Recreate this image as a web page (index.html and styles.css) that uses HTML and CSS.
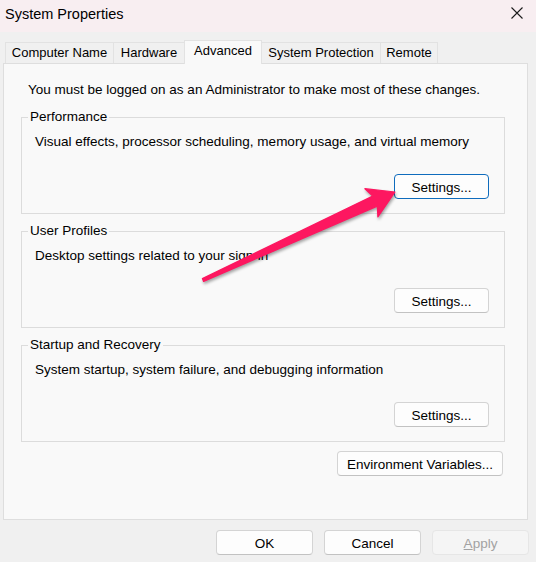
FILE: index.html
```html
<!DOCTYPE html>
<html lang="en">
<head>
<meta charset="utf-8">
<title>System Properties</title>
<link rel="stylesheet" href="styles.css">
</head>
<body>
<div class="window">
  <header class="titlebar">
    <span class="title">System Properties</span>
    <span class="close" aria-label="Close">
      <svg width="12" height="12" viewBox="0 0 12 12"><path d="M0.5 0.5 L11.5 11.5 M11.5 0.5 L0.5 11.5" stroke="#1b1b1b" stroke-width="1.1" fill="none"/></svg>
    </span>
  </header>

  <nav class="tabs">
    <div class="tab tab-first w-cn">Computer Name</div>
    <div class="tab w-hw">Hardware</div>
    <div class="tab active w-adv">Advanced</div>
    <div class="tab w-sp">System Protection</div>
    <div class="tab w-rm">Remote</div>
  </nav>

  <section class="panel">
    <p class="note">You must be logged on as an Administrator to make most of these changes.</p>

    <fieldset class="group">
      <legend>Performance</legend>
      <p class="desc">Visual effects, processor scheduling, memory usage, and virtual memory</p>
      <div class="row"><button class="btn btn-set focus">Settings...</button></div>
    </fieldset>

    <fieldset class="group">
      <legend>User Profiles</legend>
      <p class="desc">Desktop settings related to your sign-in</p>
      <div class="row"><button class="btn btn-set">Settings...</button></div>
    </fieldset>

    <fieldset class="group">
      <legend>Startup and Recovery</legend>
      <p class="desc">System startup, system failure, and debugging information</p>
      <div class="row"><button class="btn btn-set">Settings...</button></div>
    </fieldset>

    <div class="row env-row"><button class="btn btn-env">Environment Variables...</button></div>
  </section>

  <footer class="actions">
    <button class="btn btn-act">OK</button>
    <button class="btn btn-act">Cancel</button>
    <button class="btn btn-act disabled"><u>A</u>pply</button>
  </footer>

  <svg class="arrow" width="536" height="562" viewBox="0 0 536 562">
    <polygon points="202.4,278.6 372.7,196.1 364.9,188.7 395,192 377.9,216.9 377.3,206.1 203.6,281.4" fill="#fd1760" stroke="#fd1760" stroke-width="1.2" stroke-linejoin="round"/>
  </svg>
</div>
</body>
</html>
```

FILE: styles.css
```css
* { box-sizing: border-box; }

html, body {
  margin: 0;
  padding: 0;
  background: #f0f0f0;
}

body {
  font-family: "Liberation Sans", Arial, sans-serif;
  font-size: 13.5px;
  color: #000;
}

.window {
  position: relative;
  width: 536px;
  height: 562px;
  overflow: hidden;
  background: #f0f0f0;
}

/* Title bar */
.titlebar {
  height: 32px;
  background: #f8eef1;
  display: flex;
  justify-content: space-between;
  align-items: flex-start;
  padding-left: 5px;
}

.title {
  margin-top: 6px;
  line-height: 16px;
  font-size: 14.5px;
  color: #000;
}

.close {
  display: block;
  width: 12px;
  height: 12px;
  margin-top: 7px;
  margin-right: 13px;
}
.close svg { display: block; }

/* Tabs */
.tabs {
  display: flex;
  align-items: flex-end;
  height: 23px;
  margin-top: 8px;
  padding-left: 5px;
  font-size: 13px;
}

.tab {
  height: 21px;
  line-height: 20px;
  text-align: center;
  background: #f0f0f0;
  border-top: 1px solid #e2e2e2;
  border-right: 1px solid #e2e2e2;
  color: #000;
  white-space: nowrap;
}

.tab-first { border-left: 1px solid #e2e2e2; }

.tab.active {
  position: relative;
  z-index: 2;
  height: 24px;
  margin-bottom: -1px;
  line-height: 20px;
  padding-bottom: 3px;
  background: #f9f9f9;
  border-left: 1px solid #e2e2e2;
  margin-left: -1px;
}

.w-cn { width: 109px; }
.w-hw { width: 71px; }
.w-adv { width: 78px; }
.w-sp { width: 119px; }
.w-rm { width: 57px; }

/* Panel */
.panel {
  margin-left: 3px;
  width: 525px;
  height: 457px;
  background: #f9f9f9;
  border: 1px solid #dedede;
  padding: 16px 22px 0 17px;
}

.note {
  margin: 1px 0 10px 7px;
  line-height: 18px;
}

.group {
  margin: 0 0 9px 0;
  padding: 7px 15px 14px 6px;
  border: 1px solid #dcdcdc;
  min-width: 0;
}

.group legend {
  padding: 0 2px;
  line-height: 16px;
}

.desc {
  margin: 1px 0 0 7px;
  line-height: 18px;
}

.row {
  display: flex;
  justify-content: flex-end;
}

.btn-set {
  margin-top: 23px;
  width: 95px;
}

/* Buttons */
.btn {
  height: 25px;
  padding: 1px 0 0 0;
  font-family: inherit;
  font-size: 13.5px;
  color: #000;
  background: #fdfdfd;
  border: 1px solid #d4d4d4;
  border-bottom-color: #c2c2c2;
  border-radius: 4px;
}

.btn.focus {
  border: 1px solid #0f6cbd;
}

.env-row {
  margin-top: 7px;
  padding-right: 2px;
}

.btn-env { width: 166px; }

/* Footer */
.actions {
  display: flex;
  justify-content: flex-end;
  gap: 11px;
  margin-top: 10px;
  padding-right: 7px;
}

.btn-act { width: 97px; }

.btn.disabled {
  color: #a2a2a2;
  background: #f5f5f5;
  border-color: #e6e6e6;
}

/* Annotation arrow */
.arrow {
  position: absolute;
  left: 0;
  top: 0;
  pointer-events: none;
  filter: drop-shadow(1px 2px 1.5px rgba(0, 0, 0, 0.35));
}
```
